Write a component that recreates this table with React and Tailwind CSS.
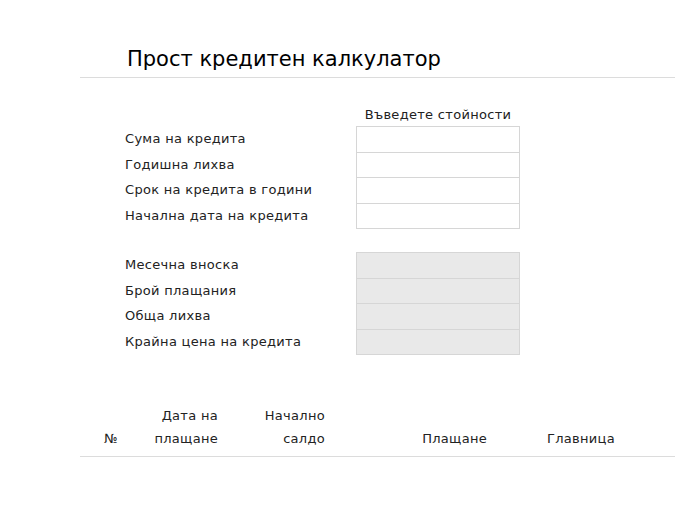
import React from 'react';

const inputs = ['Сума на кредита', 'Годишна лихва', 'Срок на кредита в години', 'Начална дата на кредита'];
const outputs = ['Месечна вноска', 'Брой плащания', 'Обща лихва', 'Крайна цена на кредита'];

const FieldBlock = ({ labels, readOnly }) => (
  <div className="flex flex-col">
    {labels.map((label, i) => (
      <div key={label} className={`flex items-center ${i > 0 ? '-mt-px' : ''}`}>
        <label className="w-[276px] pl-[45px] text-[#222]">{label}</label>
        <input
          readOnly={readOnly}
          className={
            readOnly
              ? 'h-[26.5px] w-[164px] border border-[#d6d6d6] bg-[#e9e9e9] outline-none'
              : 'h-[26.5px] w-[164px] border border-[#d6d6d6] bg-white outline-none'
          }
        />
      </div>
    ))}
  </div>
);

export default function App() {
  return (
    <div className="min-h-[520px] bg-white font-['DejaVu_Sans',sans-serif] text-[13px] leading-[20px] tracking-[0.3px] text-black">
      <div className="ml-[80px] pt-[44px]">
        <h1 className="pb-[3px] pl-[47px] text-[21px] leading-[30px] tracking-normal text-black">Прост кредитен калкулатор</h1>
        <div className="h-px bg-[#dcdcdc]" />

        <div className="pt-[26px]">
          <div className="flex">
            <div className="w-[276px]" />
            <div className="h-[22px] w-[164px] text-center leading-[22px] text-[#222]">Въведете стойности</div>
          </div>
          <FieldBlock labels={inputs} />
          <div className="h-[23px]" />
          <FieldBlock labels={outputs} readOnly />
        </div>

        <div className="mt-[49px] flex items-end pb-[6px] leading-[23px] text-[#222]">
          <div className="w-[38px] text-right">№</div>
          <div className="w-[100px] text-right">Дата на<br />плащане</div>
          <div className="w-[107px] text-right">Начално<br />салдо</div>
          <div className="w-[162px] text-right">Плащане</div>
          <div className="ml-[60px]">Главница</div>
        </div>
        <div className="h-px bg-[#dcdcdc]" />
      </div>
    </div>
  );
}
